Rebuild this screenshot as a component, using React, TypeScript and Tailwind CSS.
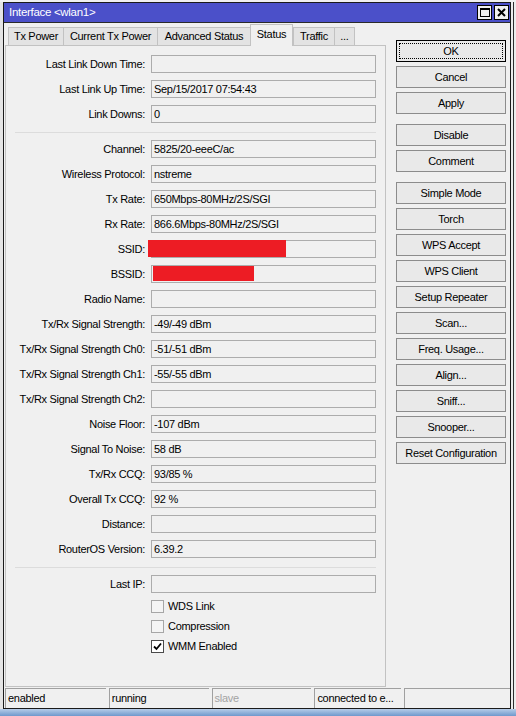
import React from "react";

type Field = { label: string; value?: string; redact?: "ssid" | "bssid" };

const TOP_FIELDS: Field[] = [
  { label: "Last Link Down Time:" },
  { label: "Last Link Up Time:", value: "Sep/15/2017 07:54:43" },
  { label: "Link Downs:", value: "0" },
];

const MID_FIELDS: Field[] = [
  { label: "Channel:", value: "5825/20-eeeC/ac" },
  { label: "Wireless Protocol:", value: "nstreme" },
  { label: "Tx Rate:", value: "650Mbps-80MHz/2S/SGI" },
  { label: "Rx Rate:", value: "866.6Mbps-80MHz/2S/SGI" },
  { label: "SSID:", redact: "ssid" },
  { label: "BSSID:", redact: "bssid" },
  { label: "Radio Name:" },
  { label: "Tx/Rx Signal Strength:", value: "-49/-49 dBm" },
  { label: "Tx/Rx Signal Strength Ch0:", value: "-51/-51 dBm" },
  { label: "Tx/Rx Signal Strength Ch1:", value: "-55/-55 dBm" },
  { label: "Tx/Rx Signal Strength Ch2:" },
  { label: "Noise Floor:", value: "-107 dBm" },
  { label: "Signal To Noise:", value: "58 dB" },
  { label: "Tx/Rx CCQ:", value: "93/85 %" },
  { label: "Overall Tx CCQ:", value: "92 %" },
  { label: "Distance:" },
  { label: "RouterOS Version:", value: "6.39.2" },
];

const TABS = [
  { label: "Tx Power", w: "w-[56px]" },
  { label: "Current Tx Power", w: "w-[95px]" },
  { label: "Advanced Status", w: "w-[94px]" },
  { label: "Status", w: "w-[43px]", active: true },
  { label: "Traffic", w: "w-[42px]" },
  { label: "...", w: "w-[21px]" },
];

const BUTTON_GROUPS = [
  ["OK", "Cancel", "Apply"],
  ["Disable", "Comment"],
  [
    "Simple Mode",
    "Torch",
    "WPS Accept",
    "WPS Client",
    "Setup Repeater",
    "Scan...",
    "Freq. Usage...",
    "Align...",
    "Sniff...",
    "Snooper...",
    "Reset Configuration",
  ],
];

function FieldRow({ field }: { field: Field }) {
  return (
    <div className="flex h-[18px] items-center">
      <div className="w-[139px] text-right whitespace-nowrap">{field.label}</div>
      <div className="relative ml-[6px] h-[18px] w-[225px] border border-[#acacac] bg-[#f0f0f0] pl-[2px] leading-[16px] whitespace-nowrap">
        {field.value}
        {field.redact === "ssid" && (
          <div className="absolute left-[-4px] top-[-1px] h-[17px] w-[138px] bg-[#ed1c24]" />
        )}
        {field.redact === "bssid" && (
          <div className="absolute left-[1px] top-0 h-[15px] w-[101px] bg-[#ed1c24]" />
        )}
      </div>
    </div>
  );
}

function Separator() {
  return (
    <div className="h-[3px] pt-[2px]">
      <div className="ml-[9px] h-px w-[361px] bg-[#dcdcdc]" />
    </div>
  );
}

function CheckRow({ label, checked }: { label: string; checked?: boolean }) {
  return (
    <div className="flex h-[13px] items-center">
      <div
        className={
          checked
            ? "ml-[145px] flex h-[13px] w-[13px] items-center justify-center border border-[#4a4a4a] bg-white"
            : "ml-[145px] h-[13px] w-[13px] border border-[#a6a6a6] bg-[#f4f4f4]"
        }
      >
        {checked && (
          <svg width="9" height="9" viewBox="0 0 9 9">
            <path d="M1 4.5 L3.5 7 L8 1.5" fill="none" stroke="#000" strokeWidth="1.8" />
          </svg>
        )}
      </div>
      <span className="ml-[4px]">{label}</span>
    </div>
  );
}

function SideButton({ label, focused }: { label: string; focused?: boolean }) {
  if (focused) {
    return (
      <div className="h-[22px] w-[110px] border border-black bg-[#e9e9e9] p-[2px]">
        <div className="flex h-full items-center justify-center border border-dotted border-black">
          {label}
        </div>
      </div>
    );
  }
  return (
    <div className="flex h-[22px] w-[110px] items-center justify-center border border-[#8c8c8c] bg-[#e9e9e9]">
      {label}
    </div>
  );
}

function StatusCell({ text, w, muted }: { text: string; w: string; muted?: boolean }) {
  return (
    <div
      className={`${w} h-[20px] border-t border-l border-[#a0a0a0] border-r-white border-b-white pl-[2px] leading-[19px] whitespace-nowrap ${
        muted ? "text-[#a3a3a3]" : "text-black"
      }`}
    >
      {text}
    </div>
  );
}

export default function App() {
  return (
    <div className="flex h-[716px] w-[516px] flex-col overflow-hidden bg-[#f0f0f0] font-['Liberation_Sans',Arial,sans-serif] text-[11px] tracking-[-0.3px] text-black">
      <div className="flex h-[709px] pt-[2px]">
        {/* whatever sits behind the window */}
        <div className="w-[3px] bg-[#e4e4e4]" />

        <div className="flex w-[508px] flex-col border border-[#1a1a1a] bg-[#f0f0f0]">
          {/* Title bar */}
          <div className="flex h-[20px] items-center border-b border-[#2a2a2a] bg-[#4b50c9] pl-[5px] pr-[1px]">
            <span className="text-[11.5px] text-white">Interface &lt;wlan1&gt;</span>
            <div className="ml-auto flex gap-[2px]">
              <div className="flex h-[15px] w-[15px] items-center justify-center border border-black bg-[#f0f0f0]">
                <div className="h-[9px] w-[10px] border border-t-2 border-black" />
              </div>
              <div className="flex h-[15px] w-[15px] items-center justify-center border border-black bg-[#f0f0f0]">
                <svg width="9" height="9" viewBox="0 0 9 9">
                  <path d="M1 1 L8 8 M8 1 L1 8" stroke="#000" strokeWidth="2" />
                </svg>
              </div>
            </div>
          </div>

          {/* Tabs, status panel and action buttons */}
          <div className="flex h-[664px]">
            <div className="ml-px flex w-[381px] flex-col">
              <div className="flex h-[22px] items-end pl-[3px]">
                {TABS.map((t) =>
                  t.active ? (
                    <div
                      key={t.label}
                      className={`${t.w} relative z-10 -mb-px flex h-[22px] items-center justify-center border border-b-0 border-[#c2c2c2] bg-[#f0f0f0] pb-[2px]`}
                    >
                      {t.label}
                    </div>
                  ) : (
                    <div
                      key={t.label}
                      className={`${t.w} -mr-px flex h-[18px] items-center justify-center border border-b-0 border-[#c2c2c2] bg-[#e3e3e3]`}
                    >
                      {t.label}
                    </div>
                  )
                )}
              </div>

              <div className="flex flex-1 flex-col gap-[7px] border border-[#c2c2c2] bg-[#f0f0f0] pt-[9px]">
                {TOP_FIELDS.map((f) => (
                  <FieldRow key={f.label} field={f} />
                ))}
                <Separator />
                {MID_FIELDS.map((f) => (
                  <FieldRow key={f.label} field={f} />
                ))}
                <Separator />
                <FieldRow field={{ label: "Last IP:" }} />
                <CheckRow label="WDS Link" />
                <CheckRow label="Compression" />
                <CheckRow label="WMM Enabled" checked />
              </div>
            </div>

            <div className="ml-[10px] flex flex-col gap-[10px] pt-[17px]">
              {BUTTON_GROUPS.map((group, gi) => (
                <div key={gi} className="flex flex-col gap-[4px]">
                  {group.map((b) => (
                    <SideButton key={b} label={b} focused={b === "OK"} />
                  ))}
                </div>
              ))}
            </div>
          </div>

          {/* Status bar */}
          <div className="flex h-[21px] items-start gap-[3px] pl-[1px] pt-px">
            <StatusCell text="enabled" w="w-[101px]" />
            <StatusCell text="running" w="w-[100px]" />
            <StatusCell text="slave" w="w-[100px]" muted />
            <StatusCell text="connected to e..." w="w-[87px]" />
            <StatusCell text="" w="w-[106px]" />
          </div>
        </div>

        <div className="flex w-[5px] bg-[#ececec] pl-[2px]">
          <div className="w-px bg-[#2e2e2e]" />
        </div>
      </div>

      {/* desktop below the window */}
      <div className="h-[7px] bg-gradient-to-b from-[#b7cde8] to-[#6f98cc]" />
    </div>
  );
}
